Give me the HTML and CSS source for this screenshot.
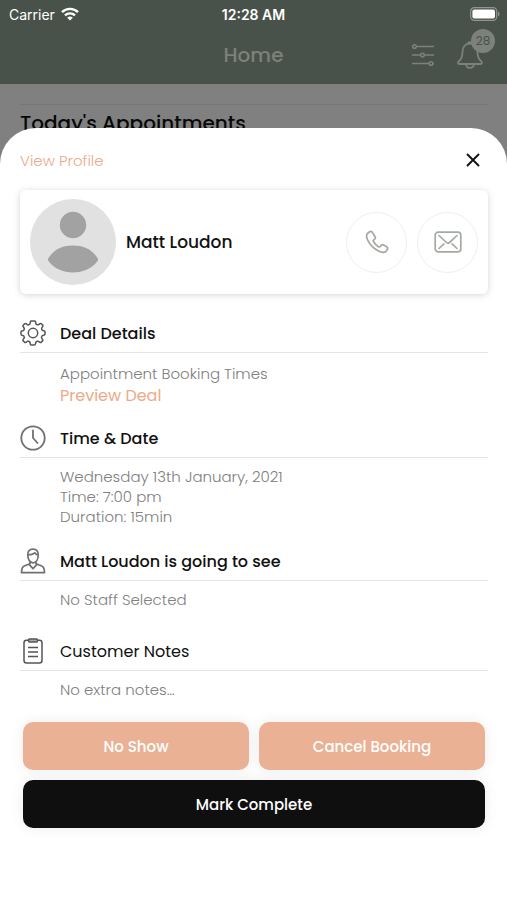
FILE: index.html
```html
<!DOCTYPE html>
<html lang="en">
<head>
<meta charset="utf-8">
<meta name="viewport" content="width=device-width, initial-scale=1">
<title>Appointment</title>
<link rel="stylesheet" href="styles.css">
</head>
<body>
<header class="top">
  <div class="status">
    <span class="carrier">Carrier
      <svg width="18" height="14" viewBox="0 0 18 14" fill="none" stroke="#fff" stroke-width="2.4"><path d="M1 5.2a11.4 11.4 0 0 1 16 0M4 8.4a7.2 7.2 0 0 1 10 0"/><path d="M9 13.6 6.2 10.8a4 4 0 0 1 5.6 0z" fill="#fff" stroke="none"/></svg>
    </span>
    <strong class="clock">12:28 AM</strong>
    <svg class="battery" width="30" height="14" viewBox="0 0 30 14"><rect x=".7" y=".7" width="26" height="12.6" rx="3.6" fill="none" stroke="#909590" stroke-width="1.2"/><rect x="2.4" y="2.4" width="22.6" height="9.2" rx="2" fill="#fff"/><path d="M28 4.6c2 .8 2 4 0 4.8z" fill="#909590"/></svg>
  </div>
  <div class="nav">
    <h1 class="title">Home</h1>
    <div class="tools">
      <button class="icon-button" aria-label="Filters"><svg width="24" height="24" viewBox="0 0 24 24" fill="none" stroke="#7c817c" stroke-width="1.5"><path d="M1 3.5h.8M5.200 3.500H23M1 12h8.800M13.200 12H23M1 20.500h17.300M21.700 20.500H23"/><circle cx="3.500" cy="3.500" r="1.800"/><circle cx="11.500" cy="12" r="1.800"/><circle cx="20" cy="20.500" r="1.800"/></svg></button>
      <button class="icon-button bell" aria-label="Notifications"><svg width="26" height="30" viewBox="0 0 26 30" fill="none" stroke="#7c817c" stroke-width="1.800" stroke-linejoin="round"><path d="M13 3.500C8 3.500 5.500 7.200 5.500 12c0 6-1.700 7.800-3.800 9.500-1.200 1-.8 2.500.6 2.500h21.400c1.400 0 1.800-1.500.6-2.500C22.200 19.800 20.500 18 20.500 12c0-4.800-2.500-8.500-7.500-8.500zM9 24.200c.4 4.800 7.600 4.800 8 0M11 3.700c0-2 4-2 4 0"/></svg><span class="badge">28</span></button>
    </div>
  </div>
</header>
<section class="behind"><h2 class="behind-title">Today's Appointments</h2></section>
<main class="sheet">
  <div class="sheet-top">
    <a class="profile-link" href="#">View Profile</a>
    <button class="icon-button" aria-label="Close"><svg width="14" height="14" viewBox="0 0 14 14" stroke="#111" stroke-width="1.900" stroke-linecap="round"><path d="M1.500 1.500l11 11M12.500 1.500l-11 11"/></svg></button>
  </div>
  <div class="card">
    <svg class="avatar" width="86" height="86" viewBox="0 0 86 86"><circle cx="43" cy="43" r="43" fill="#e1e1e1"/><circle cx="43" cy="26" r="13.200" fill="#a2a2a2"/><path d="M18.500 59C24 50 33 46.500 43 46.500S62 50 67.500 59c.8 1.300.6 2 0 3C62 69.500 53 73.500 43 73.500S24 69.500 18.500 62c-.7-1-.8-1.700 0-3z" fill="#a2a2a2"/></svg>
    <span class="name">Matt Loudon</span>
    <button class="round" aria-label="Call"><svg width="24" height="24" viewBox="0 0 24 24" fill="none" stroke="#a3aaa3" stroke-width="1.700" stroke-linejoin="round"><path d="M4.700 1.700 2.700 3.200C1.200 4.500 1.300 7 2.600 9.800c2.200 4.700 6.200 8.900 11.400 11.400 2.800 1.300 5.300 1.500 6.800.3l1.500-1.900c.7-.9.500-1.900-.4-2.600l-3.200-2c-1-.6-1.900-.4-2.500.4l-.9 1.100c-.5.600-1.200.600-1.900.200-2-1.200-3.500-2.800-4.800-4.900-.5-.8-.3-1.400.3-1.900l.8-.7c.8-.7 1-1.500.4-2.500L7.200 2.200c-.6-.9-1.600-1.100-2.500-.5z"/></svg></button>
    <button class="round" aria-label="Email"><svg width="28" height="22" viewBox="0 0 28 22" fill="none" stroke="#a3aaa3" stroke-width="1.700" stroke-linecap="round" stroke-linejoin="round"><rect x="1.200" y="1.200" width="25.600" height="19.600" rx="3"/><path d="M5 4.500l7.500 7c1 .9 2 .9 3 0l7.500-7M5 17.500l5-4.700M23 17.500l-5-4.700"/></svg></button>
  </div>
  <section class="section compact">
    <h2 class="heading"><svg width="26" height="26" viewBox="0 0 26 26" fill="none" stroke="#555" stroke-width="1.500" stroke-linejoin="round"><circle cx="13" cy="13" r="4.700"/><path d="M11.500 1h3q.8 0 1 .8l.4 1.700q.2.700.9 1l.5.200q.7.300 1.300-.1l1.400-1q.7-.4 1.300.1l1.400 1.400q.6.600.1 1.300l-1 1.500q-.4.600-.1 1.200l.3.700q.2.600.9.800l1.300.3q.8.200.8 1v2.200q0 .8-.8 1l-1.400.3q-.6.200-.9.800l-.3.700q-.3.600.1 1.200l1 1.500q.5.700-.1 1.300l-1.400 1.400q-.6.500-1.300.1l-1.400-1q-.6-.4-1.300-.1l-.5.200q-.7.300-.9 1l-.4 1.700q-.2.800-1 .8h-3q-.8 0-1-.8l-.4-1.700q-.2-.7-.9-1l-.5-.2q-.7-.3-1.300.1l-1.400 1q-.7.400-1.300-.1l-1.400-1.400q-.6-.6-.1-1.300l1-1.500q.4-.6.1-1.200l-.3-.7q-.3-.6-.9-.8L1.800 15.200q-.8-.2-.8-1V12q0-.8.8-1l1.200-.3q.6-.2.900-.8l.3-.7q.3-.6-.1-1.200l-1-1.500q-.5-.7.100-1.300l1.400-1.400q.6-.5 1.300-.1l1.400 1q.6.400 1.300.1l.5-.2q.7-.3.900-1l.4-1.800q.2-.8 1-.8z"/></svg>Deal Details</h2>
    <div class="text roomy"><p>Appointment Booking Times</p><a class="deal-link" href="#">Preview Deal</a></div>
  </section>
  <section class="section">
    <h2 class="heading"><svg width="26" height="26" viewBox="0 0 26 26" fill="none" stroke="#707070" stroke-width="1.800" stroke-linecap="round"><circle cx="13" cy="13" r="11.700"/><path d="M13 5.500V13l4.500 5"/></svg>Time &amp; Date</h2>
    <div class="text"><p>Wednesday 13th January, 2021</p><p>Time: 7:00 pm</p><p>Duration: 15min</p></div>
  </section>
  <section class="section tall">
    <h2 class="heading"><svg width="26" height="26" viewBox="0 0 26 26" fill="none" stroke="#707070" stroke-width="1.700" stroke-linejoin="round"><path d="M7.800 7C7.500 3 9.600 1.200 13 1.200S18.500 3 18.200 7c0 4.500-2 7.800-5.200 7.800S7.800 11.500 7.800 7zM8 6.800c3.200 0 5.200-.5 6.800-2 .8 1.200 1.800 1.900 3.200 2M10 13.500v2.200L4.200 18C2.400 18.800 1.500 20.800 1.500 24.700h23c0-3.900-.9-5.900-2.700-6.700L16 15.700v-2.200M8.800 16.200l4.200 4.500 4.200-4.500"/></svg>Matt Loudon is going to see</h2>
    <div class="text"><p>No Staff Selected</p></div>
  </section>
  <section class="section tall">
    <h2 class="heading regular"><svg width="26" height="26" viewBox="0 0 26 26" fill="none" stroke="#555" stroke-width="1.500" stroke-linejoin="round"><rect x="4" y="2.300" width="18" height="22.700" rx="2.500"/><rect x="8.500" y="1" width="9" height="3" rx="1" fill="#aaa"/><path d="M8 9.500h10M8 14h10M8 18.500h10"/></svg>Customer Notes</h2>
    <div class="text"><p>No extra notes…</p></div>
  </section>
  <div class="actions">
    <button class="action">No Show</button>
    <button class="action">Cancel Booking</button>
    <button class="action dark">Mark Complete</button>
  </div>
</main>
</body>
</html>
```
FILE: styles.css
```css
* { box-sizing: border-box; }
body {
  margin: 0;
  min-height: 100vh;
  display: flex;
  flex-direction: column;
  background: #808080;
  color: #111;
  font-family: Poppins, Inter, "Liberation Sans", sans-serif;
}
h1, h2, p { margin: 0; }
button {
  font: inherit;
  border: 0;
  padding: 0;
  cursor: pointer;
}
a { text-decoration: none; }
svg { display: block; flex: none; }

.top { height: 84px; background: #49524a; }
.status {
  display: grid;
  grid-template-columns: 1fr auto 1fr;
  align-items: center;
  height: 28px;
  padding: 0 7px;
  color: #fff;
  font-family: Inter, sans-serif;
  font-size: 14px;
}
.carrier { display: flex; align-items: center; gap: 6px; padding-left: 2px; }
.clock { font-weight: 600; }
.battery { justify-self: end; }
.nav {
  display: grid;
  grid-template-columns: 1fr auto 1fr;
  align-items: center;
  height: 54px;
  padding: 0 24px;
}
.title {
  grid-column: 2;
  color: #7c817c;
  font-size: 20px;
  font-weight: 500;
}
.tools { display: flex; justify-content: flex-end; align-items: center; gap: 22px; }
.icon-button { display: block; background: none; }
.bell { position: relative; }
.badge {
  position: absolute;
  top: -11px;
  right: -12px;
  width: 24px;
  border-radius: 50%;
  background: #7c817c;
  color: #49524a;
  font-size: 12px;
  line-height: 24px;
  text-align: center;
}

.behind {
  height: 44px;
  padding: 20px 19px 0 20px;
}
.behind-title {
  border-top: 1px solid #777;
  color: #080808;
  font-size: 20px;
  font-weight: 500;
  line-height: 36px;
}
.sheet {
  position: relative;
  flex: 1;
  padding: 0 19px 20px 20px;
  border-radius: 36px 36px 0 0;
  background: #fff;
}
.sheet-top {
  display: flex;
  justify-content: space-between;
  align-items: center;
  height: 62px;
  padding: 2px 8px 0 0;
}
.profile-link { color: #ecaa8a; font-size: 15px; font-weight: 300; }
.card {
  display: flex;
  align-items: center;
  gap: 10px;
  margin-bottom: 20px;
  padding: 9px 10px;
  border-radius: 6px;
  box-shadow: 0 1px 7px rgba(0, 0, 0, .17);
}
.name { flex: 1; font-size: 17px; font-weight: 500; }
.round {
  display: grid;
  place-items: center;
  width: 61px;
  height: 61px;
  border: 1px solid #eee;
  border-radius: 50%;
  background: #fff;
}
.section { padding-bottom: 15px; }
.compact { padding-bottom: 12px; }
.tall { padding-bottom: 22px; }
.heading {
  display: flex;
  align-items: center;
  gap: 14px;
  height: 39px;
  border-bottom: 1px solid #e4e6e6;
  font-size: 16px;
  font-weight: 500;
}
.regular { font-weight: 400; }
.text {
  padding: 9px 0 0 40px;
  color: #808080;
  font-size: 15px;
  font-weight: 300;
  line-height: 20px;
}
.roomy { padding-top: 10px; line-height: 22px; }
.deal-link { color: #ecaa8a; font-size: 16px; font-weight: 400; }
.actions {
  display: grid;
  grid-template-columns: 1fr 1fr;
  gap: 10px;
  padding: 0 3px;
}
.action {
  height: 48px;
  border-radius: 10px;
  background: #eab195;
  box-shadow: 0 0 14px rgba(0, 0, 0, .08);
  color: #fff;
  font-size: 15px;
  font-weight: 500;
}
.dark { grid-column: 1 / -1; background: #0f0f0f; }
```
